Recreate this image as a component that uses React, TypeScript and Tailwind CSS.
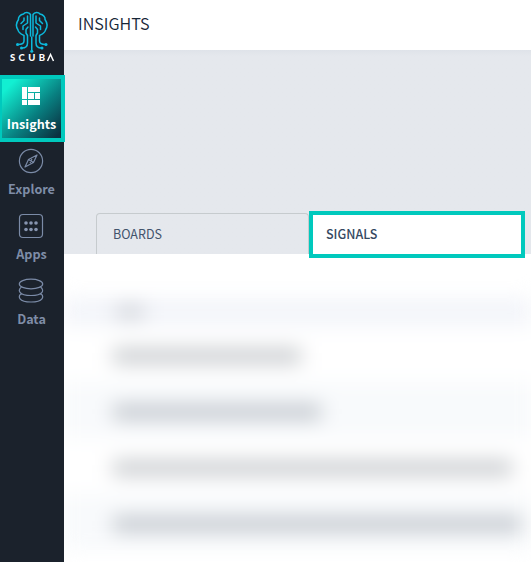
import React from "react";

const FONT = "font-['Noto_Sans_CJK_SC','Noto_Sans',sans-serif]";

function ScubaLogo() {
  return (
    <svg width="64" height="75" viewBox="0 0 64 75" fill="none" className="block shrink-0">
      <g stroke="#0cb9dc" strokeWidth="1.5" strokeLinecap="round" strokeLinejoin="round">
        <path d="M30.500 36V14.500C29 12 25 12 23.500 14C20 14.500 18 17.500 18.500 19.500C16 23 16 27 18 30C18.500 33 21 34 24 35.500V41C24 44 21.500 44.500 18 44.500" />
        <path d="M27.500 16V23L23 26V29.500" />
        <path d="M24 18V20.500L21 23.500" />
        <path d="M28 27L26 29.500V33L27.500 35.500V43C27.500 46 25.500 48 22 48" />
        <path d="M33 36V14.500C34.500 12 38.500 12 40 14C43.500 14.500 45.500 17.500 45 19.500C47.500 23 47.500 27 45.500 30C45 33 42.500 34 39.500 35.500V41C39.500 44 42 44.500 45.500 44.500" />
        <path d="M36 16V23L40.500 26V29.500" />
        <path d="M39.500 18V20.500L42.500 23.500" />
        <path d="M35.500 27L37.500 29.500V33L36 35.500V43C36 46 38 48 41.500 48" />
        <path d="M31.750 37V51" />
      </g>
      <g fill="#0cb9dc">
        <circle cx="17.500" cy="44.500" r="1.500" />
        <circle cx="21.500" cy="48" r="1.500" />
        <circle cx="46" cy="44.500" r="1.500" />
        <circle cx="42" cy="48" r="1.500" />
        <circle cx="31.750" cy="51.300" r="1.500" />
      </g>
      <text x="10" y="61" fill="#fff" fontFamily="Lato, sans-serif" fontWeight="900" fontSize="9.500" textLength="35" lengthAdjust="spacing">SCUB</text>
      <path d="M47.500 61L50.500 54.500L53.500 61" stroke="#fff" strokeWidth="1.500" />
    </svg>
  );
}

function BoardIcon() {
  return (
    <svg width="18" height="18" viewBox="0 0 18 18" fill="#fff" className="mr-[2px]">
      <path d="M0 0H5V12H0zM6 0H18V5H6zM6 6H12V12H6zM13 6H18V12H13zM0 13H5V18H0zM6 13H18V18H6z" />
    </svg>
  );
}

function CompassIcon() {
  return (
    <svg width="26" height="26" viewBox="0 0 26 26" fill="none" stroke="#7b8ba7" strokeWidth="1.200" strokeLinejoin="round">
      <circle cx="13" cy="13" r="11.600" />
      <path d="M19 7L15.500 14.500L7 19L10.500 11.500ZM10.500 11.500L15.500 14.500M14 11L12 15" />
    </svg>
  );
}

function AppsIcon() {
  return (
    <svg width="26" height="26" viewBox="0 0 26 26" fill="none">
      <rect x="1.500" y="1.500" width="23" height="23" rx="3.500" stroke="#7b8ba7" strokeWidth="1.200" />
      <g fill="#8795b0">
        <circle cx="8" cy="10" r="1.800" /><circle cx="13" cy="10" r="1.800" /><circle cx="18" cy="10" r="1.800" />
        <circle cx="8" cy="16.500" r="1.800" /><circle cx="13" cy="16.500" r="1.800" /><circle cx="18" cy="16.500" r="1.800" />
      </g>
    </svg>
  );
}

function DataIcon() {
  return (
    <svg width="26" height="26" viewBox="0 0 26 26" fill="none" stroke="#7b8ba7" strokeWidth="1.200">
      <ellipse cx="13" cy="6" rx="11.700" ry="4.800" />
      <path d="M3.500 9C-.5 12 .5 17.500 13 17.500S26.500 12 22.500 9M3.500 15.200C-.5 18.500 .5 24 13 24S26.500 18.500 22.500 15.200" />
    </svg>
  );
}

function NavItem({ icon, label }: { icon: React.ReactNode; label: string }) {
  return (
    <div className="flex h-[65px] w-[62px] flex-col items-center pt-[6px] text-[#7f8da7]">
      {icon}
      <span className="mt-[5px] ml-px text-[12.600px] leading-5 font-bold">{label}</span>
    </div>
  );
}

const rows = [
  { tint: false, words: [118, 70], tone: "bg-[#c3c6ca]" },
  { tint: true, words: [140, 68], tone: "bg-[#bdc2c9]" },
  { tint: false, words: [66, 77, 54, 60, 36, 106], tone: "bg-[#c3c6ca]" },
  { tint: true, words: [74, 76, 54, 60, 36, 108], tone: "bg-[#bdc2c9]" },
];

export default function App() {
  return (
    <div className={`flex h-[562px] w-[531px] overflow-hidden bg-white ${FONT}`}>
      <aside className="relative z-10 flex w-16 shrink-0 flex-col bg-[#1b222c]">
        <ScubaLogo />
        <div className="flex h-[67px] w-[65px] shrink-0 flex-col items-center border-[4px] border-l-2 border-[#00c9bd] bg-linear-[135deg,#12efd2_12%,#087f80_58%,#0b3141_95%] pt-2 text-white">
          <BoardIcon />
          <span className="mt-[9px] text-[12.600px] leading-5 font-bold">Insights</span>
        </div>
        <NavItem icon={<CompassIcon />} label="Explore" />
        <NavItem icon={<AppsIcon />} label="Apps" />
        <NavItem icon={<DataIcon />} label="Data" />
      </aside>
      <main className="flex w-[467px] flex-col">
        <header className="flex h-[50px] shrink-0 items-center pl-[14px] text-[16.200px] text-[#172638]">
          <span className="-mt-[3px] font-[350]">INSIGHTS</span>
        </header>
        <section className="flex h-[204px] shrink-0 items-end bg-[#e5e8ed] bg-linear-to-b from-[#dfe3e9] to-[#e5e8ed] to-3% pl-8">
          <div className="flex h-[41px] w-[213px] items-center rounded-t-[4px] border border-b-0 border-[#c6cbce] pl-4 text-[12.500px] text-[#42536c]">BOARDS</div>
          <div className="relative z-10 -mb-1 flex h-[47px] w-[216px] items-center border-4 border-[#00c9bd] bg-white pl-[13px] text-[12.500px] font-medium text-[#344861]">SIGNALS</div>
        </section>
        <section className="relative flex-1 overflow-hidden bg-white">
          <div className="pt-[44px] blur-[10px]">
            <div className="flex h-7 items-center bg-[#f3f5fa] pl-[52px]">
              <div className="h-3 w-7 bg-[#cccfd5]" />
            </div>
            {rows.map((row, i) => (
              <div key={i} className={`flex h-14 items-center pt-[3px] pl-[49px] ${row.tint ? "bg-[#f8fafc]" : "bg-white"}`}>
                {row.words.map((w, j) => (
                  <div key={j} className={`h-[14px] shrink-0 ${row.tone}`} style={{ width: w }} />
                ))}
              </div>
            ))}
          </div>
        </section>
      </main>
    </div>
  );
}
